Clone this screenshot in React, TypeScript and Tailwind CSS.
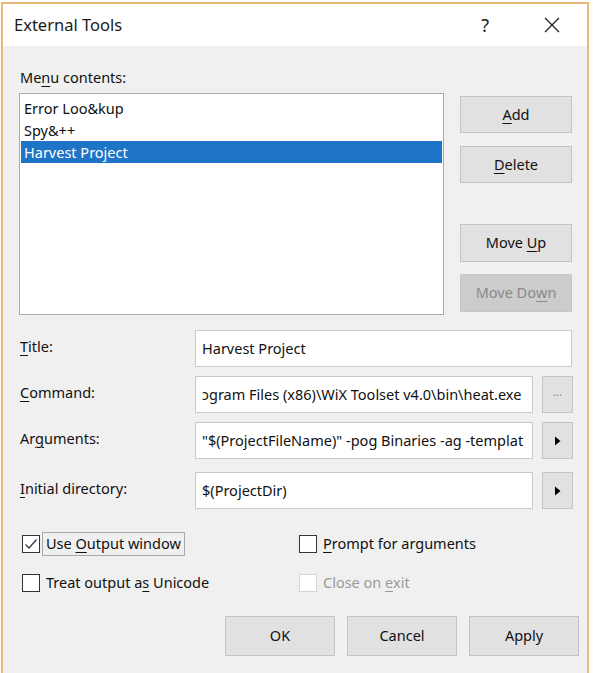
import React from 'react'

const font = { fontFamily: '"Noto Sans", "Open Sans", Arial, sans-serif' }

function U({ children }: { children: React.ReactNode }) {
  return <span className="underline underline-offset-[3px] decoration-1">{children}</span>
}

function Btn({
  children,
  className = '',
  disabled = false,
}: {
  children: React.ReactNode
  className?: string
  disabled?: boolean
}) {
  return (
    <div
      className={`flex items-center justify-center border text-[14.5px] ${
        disabled ? 'border-[#c6c6c6] bg-[#cccccc] text-[#8a8a8a]' : 'border-[#c4c4c4] bg-[#e1e1e1] text-[#111]'
      } ${className}`}
    >
      <span className="flex items-center whitespace-pre">{children}</span>
    </div>
  )
}

function Arrow() {
  return (
    <svg width="7" height="10" viewBox="0 0 7 10">
      <path d="M1 0.5 L6.5 5 L1 9.5 Z" fill="#000" />
    </svg>
  )
}

function FieldRow({
  label,
  value,
  side,
}: {
  label: React.ReactNode
  value: string
  side?: React.ReactNode
}) {
  return (
    <div className="flex h-[37px] items-center">
      <div className="-mt-[4px] w-[175px] text-[14.5px] text-[#111]">{label}</div>
      <div
        className={`flex h-full items-center overflow-hidden whitespace-nowrap border border-[#c9c9c9] bg-white pl-[6px] text-[14.5px] text-[#111] ${
          side ? 'w-[338px]' : 'w-[377px]'
        }`}
      >
        {value}
      </div>
      {side && <Btn className="ml-[9px] h-full w-[31px]">{side}</Btn>}
    </div>
  )
}

function Check({
  checked = false,
  disabled = false,
  label,
  focus = false,
}: {
  checked?: boolean
  disabled?: boolean
  label: React.ReactNode
  focus?: boolean
}) {
  return (
    <div className="flex h-[24px] items-center">
      <div
        className={`flex h-[18px] w-[18px] items-center justify-center border bg-white ${
          disabled ? 'border-[#d4d4d4]' : 'border-[#333]'
        }`}
      >
        {checked && (
          <svg width="14" height="12" viewBox="0 0 14 12">
            <path d="M1.5 6.5 L5 10 L12.5 1.5" fill="none" stroke="#333" strokeWidth="1.2" />
          </svg>
        )}
      </div>
      <div
        className={`ml-[2px] flex h-[24px] items-center px-[3px] text-[14.5px] ${
          focus ? 'border border-[#a8a8a8]' : 'border border-transparent'
        } ${disabled ? 'text-[#9a9a9a]' : 'text-[#111]'}`}
      >
        <span className="whitespace-pre">{label}</span>
      </div>
    </div>
  )
}

export default function App() {
  return (
    <div className="h-[673px] w-[593px] overflow-hidden bg-white pt-[2px]" style={font}>
      <div className="ml-[1px] flex h-[671px] w-[588px] flex-col border-x-2 border-t-2 border-[#ebb877]">
        {/* title bar */}
        <div className="flex h-[42px] shrink-0 items-center bg-white pl-[11px]">
          <span className="text-[16.5px] text-[#1a1a1a]">External Tools</span>
          <span className="ml-auto text-[18px] text-[#222]">?</span>
          <svg className="ml-[55px] mr-[27px]" width="16" height="16" viewBox="0 0 16 16">
            <path d="M1 1 L15 15 M15 1 L1 15" stroke="#222" strokeWidth="1.3" />
          </svg>
        </div>

        {/* body */}
        <div className="flex flex-1 flex-col bg-[#f0f0f0] pl-[16px]">
          <div className="mt-[20px] h-[22px] pl-[1px] text-[14.5px] leading-[22px] text-[#111]">
            Me<U>n</U>u contents:
          </div>

          <div className="mt-[5px] flex">
            <div className="h-[222px] w-[425px] border border-[#aaaaaa] bg-white pt-[3px] text-[14.5px] leading-[22px] text-[#111]">
              <div className="pl-[4px]">Error Loo&amp;kup</div>
              <div className="pl-[4px]">Spy&amp;++</div>
              <div className="mx-[1px] bg-[#1e74c6] pl-[3px] text-white">Harvest Project</div>
            </div>
            <div className="ml-[16px] flex w-[112px] flex-col pt-[3px]">
              <Btn className="h-[37px]">
                <U>A</U>dd
              </Btn>
              <Btn className="mt-[13px] h-[37px]">
                <U>D</U>elete
              </Btn>
              <Btn className="mt-[41px] h-[38px]">
                Move <U>U</U>p
              </Btn>
              <Btn disabled className="mt-[12px] h-[38px]">
                Move Do<U>w</U>n
              </Btn>
            </div>
          </div>

          <div className="mt-[15px] flex flex-col gap-[9px] pl-[1px]">
            <FieldRow
              label={
                <>
                  <U>T</U>itle:
                </>
              }
              value="Harvest Project"
            />
            <FieldRow
              label={
                <>
                  <U>C</U>ommand:
                </>
              }
              value={'\u0254gram Files (x86)\\WiX Toolset v4.0\\bin\\heat.exe'}
              side={<span className="-mt-[4px] text-[11px] text-[#777]">...</span>}
            />
            <FieldRow
              label={
                <>
                  Ar<U>g</U>uments:
                </>
              }
              value={'"$(ProjectFileName)" -pog Binaries -ag -templat'}
              side={<Arrow />}
            />
            <div className="mt-[4px]">
              <FieldRow
                label={
                  <>
                    <U>I</U>nitial directory:
                  </>
                }
                value="$(ProjectDir)"
                side={<Arrow />}
              />
            </div>
          </div>

          <div className="mt-[23px] grid grid-cols-[277px_1fr] gap-y-[15px] pl-[3px]">
            <Check
              checked
              focus
              label={
                <>
                  Use <U>O</U>utput window
                </>
              }
            />
            <Check
              label={
                <>
                  <U>P</U>rompt for arguments
                </>
              }
            />
            <Check
              label={
                <>
                  Treat output a<U>s</U> Unicode
                </>
              }
            />
            <Check
              disabled
              label={
                <>
                  Close on <U>e</U>xit
                </>
              }
            />
          </div>

          <div className="mt-[21px] flex gap-[12px] pl-[206px]">
            <Btn className="h-[40px] w-[110px] border-[#2a7fd4]">OK</Btn>
            <Btn className="h-[40px] w-[110px]">Cancel</Btn>
            <Btn className="h-[40px] w-[110px]">Apply</Btn>
          </div>
        </div>
      </div>
    </div>
  )
}
